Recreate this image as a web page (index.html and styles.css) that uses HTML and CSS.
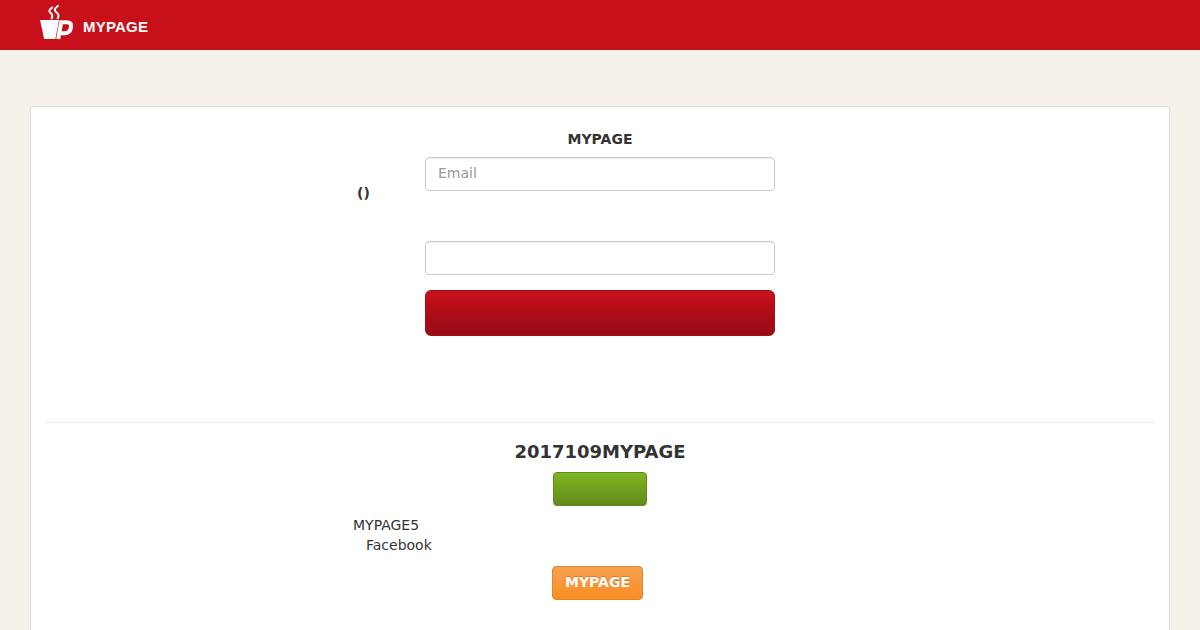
FILE: index.html
```html
<!DOCTYPE html>
<html lang="ja">
<head>
  <meta charset="UTF-8">
  <meta name="viewport" content="width=device-width, initial-scale=1.0">
  <title>MYPAGE</title>
  <link rel="stylesheet" href="styles.css">
</head>
<body>
  <header class="navbar">
    <a class="brand" href="#">
      <svg class="brand-icon" width="34" height="35" viewBox="0 0 34 35">
        <path class="cup" d="M0 15h19l-3.600 19H4.200z"/>
        <path class="steam" d="M12.700 2c-4.500 3.500-4 4.500-1.500 6.500 1.500 1.500 1.500 3 0 5.500M18.600 .3c-5 4-4.500 5-1.700 7.500 2.500 2 2 3.800.5 6.200"/>
        <path class="handle" d="M18.200 34l3-16.800h5.700c4 0 4.500 2.600 4 5.500-.6 3.600-2.500 5.600-6.200 5.600h-5"/>
      </svg>
      <span class="brand-name">MYPAGE</span>
    </a>
  </header>

  <main class="panel">
    <form class="login">
      <p class="login-title">MYPAGE</p>
      <label class="login-label" for="email">()</label>
      <input class="form-control" type="email" id="email" placeholder="Email">
      <input class="form-control password" type="password" aria-label="Password">
      <button class="btn btn-red" type="submit" aria-label="Login"></button>
    </form>

    <hr>

    <section class="signup">
      <h4>2017109MYPAGE</h4>
      <button class="btn btn-green" type="button" aria-label="Register"></button>
      <div class="notes">
        <p>MYPAGE5</p>
        <p class="indent">Facebook</p>
      </div>
      <button class="btn btn-orange" type="button">MYPAGE</button>
    </section>
  </main>
</body>
</html>
```
FILE: styles.css
```css
* {
  box-sizing: border-box;
}
body {
  margin: 0;
  background: #f5f0ea;
  color: #333;
  font-family: "DejaVu Sans", sans-serif;
  font-size: 14px;
  line-height: 20px;
}
p, h4 {
  margin: 0;
}
.navbar {
  height: 50px;
  padding: 5px 40px;
  background: #c8101b;
}
.brand {
  display: flex;
  width: max-content;
  gap: 9px;
  color: #fff;
  text-decoration: none;
}
.brand-name {
  padding-top: 12px;
  font: bold 15px/20px "Liberation Sans", Arial, sans-serif;
  letter-spacing: .2px;
}
.cup {
  fill: #fff;
}
.steam {
  fill: none;
  stroke: #fff;
  stroke-width: 2;
}
.handle {
  fill: none;
  stroke: #fff;
  stroke-width: 4.100;
}
.panel {
  height: 524px;
  margin: 56px 30px 0;
  padding: 22px 15px;
  background: #fff;
  border: 1px solid #ddd;
  border-bottom: 0;
  border-radius: 4px 4px 0 0;
}
.login {
  display: grid;
  grid-template-columns: 68px 350px 68px;
  justify-content: center;
}
.login-title {
  grid-column: 2;
  margin-bottom: 8px;
  font-weight: bold;
  text-align: center;
}
.login-label {
  grid-column: 1;
  height: 34px;
  padding-top: 26px;
  font-weight: bold;
}
.form-control {
  grid-column: 2;
  width: 100%;
  height: 34px;
  padding: 5px 12px 7px;
  border: 1px solid #ccc;
  border-radius: 4px;
  box-shadow: inset 0 1px 1px rgba(0, 0, 0, .075);
  font: inherit;
}
.form-control::placeholder {
  color: #999;
}
.password {
  margin: 50px 0 15px;
}
.btn {
  height: 34px;
  padding: 5px 12px 7px;
  border: 1px solid;
  border-radius: 4px;
  color: #fff;
  font: bold 14px/20px "DejaVu Sans", sans-serif;
  text-shadow: 0 -1px 0 rgba(0, 0, 0, .2);
}
.btn-red {
  grid-column: 2;
  height: 46px;
  border-color: #a00e18;
  border-radius: 6px;
  background: linear-gradient(#c8101b, #960a15);
}
.btn-green {
  width: 94px;
  margin: 10px 0 9px;
  border-color: #61891b;
  background: linear-gradient(#80b522, #618b1a);
}
.btn-orange {
  margin: 11px 5px 0 0;
  border-color: #dc8634;
  background: linear-gradient(#f8a050, #f98e22);
}
hr {
  margin: 86px 0 19px;
  border: 0;
  border-top: 1px solid #eee;
}
.signup {
  display: flex;
  flex-direction: column;
  align-items: center;
}
.signup h4 {
  font-size: 18px;
  line-height: 20px;
}
.notes {
  width: 494px;
}
.indent {
  padding-left: 13px;
}
```
